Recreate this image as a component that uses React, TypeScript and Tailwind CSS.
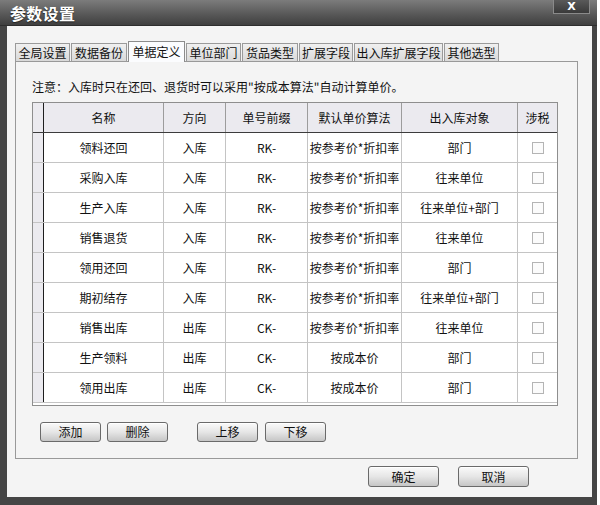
import React from 'react';

const FONT = { fontFamily: '"Noto Sans CJK SC", "Noto Sans", sans-serif' };

// label + width of each tab
const tabs: [string, string][] = [
  ['全局设置', 'w-[55px]'],
  ['数据备份', 'w-[56px]'],
  ['单据定义', 'w-[57px]'],
  ['单位部门', 'w-[55px]'],
  ['货品类型', 'w-[56px]'],
  ['扩展字段', 'w-[54px]'],
  ['出入库扩展字段', 'w-[89px]'],
  ['其他选型', 'w-[55px]'],
];

const headers = ['名称', '方向', '单号前缀', '默认单价算法', '出入库对象', '涉税'];

const rows = [
  ['领料还回', '入库', 'RK-', '按参考价*折扣率', '部门'],
  ['采购入库', '入库', 'RK-', '按参考价*折扣率', '往来单位'],
  ['生产入库', '入库', 'RK-', '按参考价*折扣率', '往来单位+部门'],
  ['销售退货', '入库', 'RK-', '按参考价*折扣率', '往来单位'],
  ['领用还回', '入库', 'RK-', '按参考价*折扣率', '部门'],
  ['期初结存', '入库', 'RK-', '按参考价*折扣率', '往来单位+部门'],
  ['销售出库', '出库', 'CK-', '按参考价*折扣率', '往来单位'],
  ['生产领料', '出库', 'CK-', '按成本价', '部门'],
  ['领用出库', '出库', 'CK-', '按成本价', '部门'],
];

// column widths after the row indicator
const cols = ['w-[120px]', 'w-[62px]', 'w-[82px]', 'w-[94px]', 'w-[116px]', 'w-[39px]'];

function WinButton({ label, className = '' }: { label: string; className?: string }) {
  return (
    <button
      className={`flex items-center justify-center rounded-[3px] border border-[#6a6a6a] bg-gradient-to-b from-[#fafafa] via-[#e6e6e6] to-[#c6c6c6] text-[12px] leading-none text-[#111] shadow-[inset_0_1px_0_#ffffff] ${className}`}
    >
      {label}
    </button>
  );
}

export default function App() {
  return (
    <div className="flex h-[505px] w-[600px] bg-white text-[#111]" style={FONT}>
      {/* Dialog window */}
      <div className="flex h-[505px] w-[597px] flex-col bg-[#454545]">
        {/* Title bar */}
        <div className="flex h-[26px] items-start justify-between border-b border-[#2e2e2e] bg-gradient-to-b from-[#7c7c7c] to-[#3f3f3f] pl-[10px] pr-[7px]">
          <span className="mt-[3px] text-[16px] font-bold leading-[20px] tracking-[0.3px] text-white [text-shadow:0_1px_1px_#222]">参数设置</span>
          <div className="flex h-[14px] w-[37px] items-center justify-center border border-t-0 border-[#8a8a8a] bg-gradient-to-b from-[#5a5a5a] to-[#3a3a3a] text-[11px] font-bold leading-none text-white" style={{ fontFamily: '"DejaVu Sans", sans-serif' }}>
            X
          </div>
        </div>

        {/* Client area */}
        <div className="mb-[8px] ml-[7px] mr-[5px] flex flex-1 flex-col bg-[#f4f4f4]">
          {/* Tabs */}
          <div className="ml-[8px] mt-[15px] flex h-[20px] items-end gap-[1px]">
            {tabs.map(([t, w]) => {
              const active = t === '单据定义';
              return (
                <div
                  key={t}
                  className={
                    active
                      ? `relative z-10 -mb-[1px] flex h-[21px] items-center justify-center border border-b-0 border-[#8c8c8c] bg-[#fbfcfe] text-[12px] leading-none ${w}`
                      : `flex h-[18px] items-center justify-center border border-b-0 border-[#9a9a9a] bg-gradient-to-b from-[#f0f0f0] to-[#d9d9d9] text-[12px] leading-none ${w}`
                  }
                >
                  {t}
                </div>
              );
            })}
          </div>

          {/* Tab panel */}
          <div className="ml-[8px] flex h-[398px] w-[563px] flex-col border border-[#999999] bg-[#f4f4f4] pl-[16px] pt-[17px]">
            <div className="h-[16px] text-[12px] leading-[16px]">注意：入库时只在还回、退货时可以采用"按成本算法"自动计算单价。</div>

            {/* Grid */}
            <div className="mt-[7px] h-[304px] w-[526px] border border-[#8e8e8e] bg-white">
              <div className="flex h-[30px] border-b border-[#3c3c3c] bg-[#ebeaef]">
                <div className="w-[11px] border-r border-[#1e1e1e]" />
                {headers.map((h, i) => (
                  <div
                    key={h}
                    className={`flex items-center justify-center text-[12px] ${cols[i]} ${i < headers.length - 1 ? 'border-r border-[#9c9c9c]' : ''}`}
                  >
                    {h}
                  </div>
                ))}
              </div>
              {rows.map((r) => (
                <div key={r[0]} className="flex h-[30px] border-b border-[#c4c4c4]">
                  <div className="w-[11px] border-r border-[#1e1e1e] bg-[#ebeaef]" />
                  {r.map((c, i) => (
                    <div key={i} className={`flex items-center justify-center border-r border-[#c4c4c4] text-[12px] ${cols[i]}`}>
                      {c}
                    </div>
                  ))}
                  <div className={`flex items-center justify-center ${cols[5]}`}>
                    <div className="h-[12px] w-[12px] border border-[#b4b4b4] bg-[#fbfbfb]" />
                  </div>
                </div>
              ))}
            </div>

            {/* Grid buttons */}
            <div className="ml-[8px] mt-[16px] flex">
              <WinButton label="添加" className="h-[20px] w-[61px]" />
              <WinButton label="删除" className="ml-[6px] h-[20px] w-[61px]" />
              <WinButton label="上移" className="ml-[29px] h-[20px] w-[61px]" />
              <WinButton label="下移" className="ml-[7px] h-[20px] w-[61px]" />
            </div>
          </div>

          {/* Dialog buttons */}
          <div className="ml-[361px] mt-[7px] flex gap-[19px]">
            <WinButton label="确定" className="h-[21px] w-[71px]" />
            <WinButton label="取消" className="h-[21px] w-[71px]" />
          </div>
        </div>
      </div>
    </div>
  );
}
